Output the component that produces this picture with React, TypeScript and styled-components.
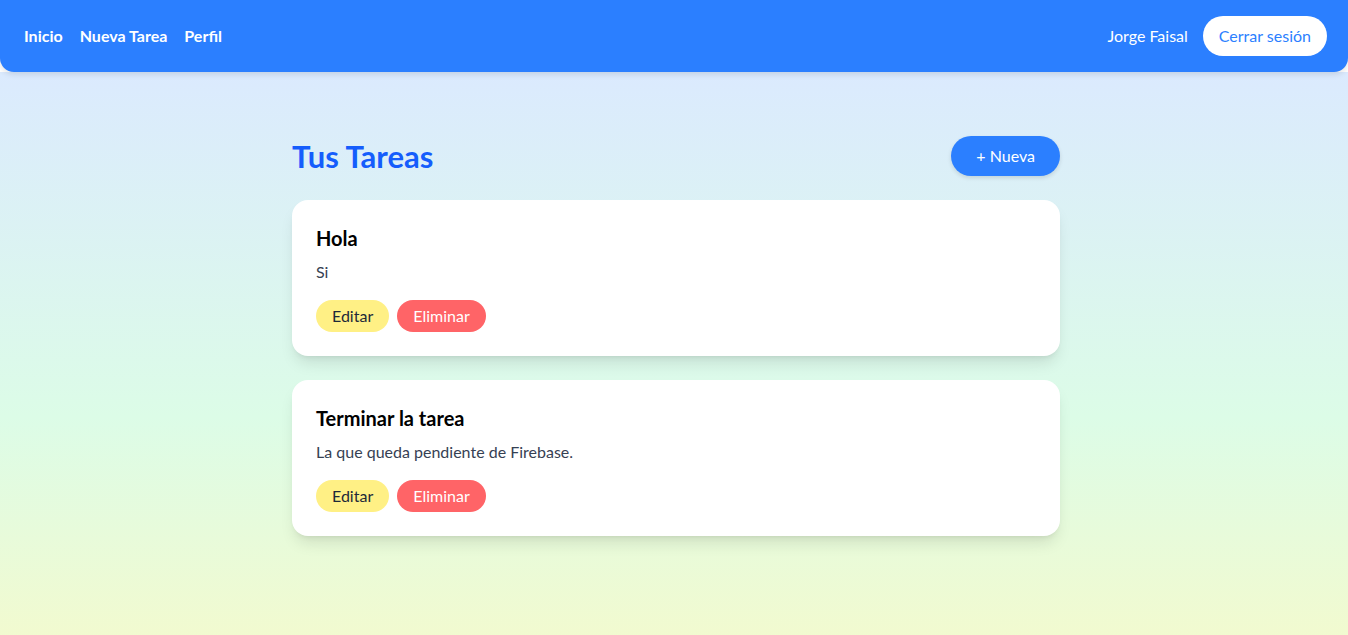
import React from "react";
import styled, { createGlobalStyle } from "styled-components";

const GlobalStyle = createGlobalStyle`
  html, body { margin: 0; padding: 0; background: #ffffff; }
  body { font-family: Lato, "Open Sans", "Noto Sans", sans-serif; }
  * { box-sizing: border-box; }
`;

const Page = styled.div`
  height: 100vh;
  display: flex;
  flex-direction: column;
  overflow: hidden;
`;

const NavBar = styled.nav`
  height: 72px;
  flex-shrink: 0;
  background: #2b7fff;
  border-radius: 0 0 14px 14px;
  display: flex;
  align-items: center;
  justify-content: space-between;
  padding: 0 21px 0 24px;
  box-shadow: 0 2px 6px rgba(0, 0, 0, 0.12);
  position: relative;
  z-index: 1;
`;

const NavLinks = styled.div`
  display: flex;
  gap: 17px;
`;

const NavLink = styled.a`
  color: #ffffff;
  font-weight: 700;
  font-size: 16px;
  line-height: 24px;
  text-decoration: none;
`;

const UserArea = styled.div`
  display: flex;
  align-items: center;
  gap: 15px;
`;

const UserName = styled.span`
  color: #ffffff;
  font-size: 16px;
  line-height: 24px;
`;

const LogoutButton = styled.button`
  background: #ffffff;
  color: #2b7fff;
  border: none;
  border-radius: 9999px;
  font-family: inherit;
  font-size: 16px;
  line-height: 24px;
  padding: 8px 16px;
  cursor: pointer;
`;

const Main = styled.main`
  flex: 1;
  background: linear-gradient(to bottom, #dbeafe, #dcfce7, #fef9c2) top / 100% 690px no-repeat;
  display: flex;
  justify-content: center;
  padding: 64px 0 0 4px;
`;

const Container = styled.div`
  width: 768px;
`;

const HeaderRow = styled.div`
  display: flex;
  align-items: center;
  justify-content: space-between;
  margin-bottom: 24px;
`;

const Title = styled.h1`
  margin: 0;
  font-size: 31px;
  line-height: 36px;
  font-weight: 700;
  color: #155dfc;
`;

const NewButton = styled.button`
  background: #2b7fff;
  color: #ffffff;
  border: none;
  border-radius: 9999px;
  font-family: inherit;
  font-size: 16px;
  line-height: 24px;
  padding: 8px 25px;
  box-shadow: 0 2px 4px rgba(0, 0, 0, 0.12);
  cursor: pointer;
`;

const TaskList = styled.div`
  display: flex;
  flex-direction: column;
  gap: 24px;
`;

const Card = styled.div`
  background: #ffffff;
  border-radius: 16px;
  padding: 24px;
  box-shadow: 0 10px 15px -3px rgba(0, 0, 0, 0.1), 0 4px 6px -4px rgba(0, 0, 0, 0.1);
`;

const CardTitle = styled.h2`
  margin: 0 0 8px;
  font-size: 20px;
  line-height: 28px;
  font-weight: 700;
  color: #000000;
`;

const CardText = styled.p`
  margin: 0;
  font-size: 16px;
  line-height: 24px;
  color: #364153;
`;

const Actions = styled.div`
  display: flex;
  gap: 8px;
  margin-top: 16px;
`;

const ActionButton = styled.button<{ $variant: "edit" | "delete" }>`
  border: none;
  border-radius: 9999px;
  font-family: inherit;
  font-size: 16px;
  line-height: 24px;
  padding: 4px 16px;
  cursor: pointer;
  background: ${(p) => (p.$variant === "edit" ? "#fff085" : "#ff6467")};
  color: ${(p) => (p.$variant === "edit" ? "#1e2939" : "#ffffff")};
`;

const tasks = [
  { id: 1, title: "Hola", description: "Si" },
  { id: 2, title: "Terminar la tarea", description: "La que queda pendiente de Firebase." },
];

export default function App() {
  return (
    <>
      <GlobalStyle />
      <Page>
        <NavBar>
          <NavLinks>
            <NavLink href="#">Inicio</NavLink>
            <NavLink href="#">Nueva Tarea</NavLink>
            <NavLink href="#">Perfil</NavLink>
          </NavLinks>
          <UserArea>
            <UserName>Jorge Faisal</UserName>
            <LogoutButton>Cerrar sesión</LogoutButton>
          </UserArea>
        </NavBar>
        <Main>
          <Container>
            <HeaderRow>
              <Title>Tus Tareas</Title>
              <NewButton>+ Nueva</NewButton>
            </HeaderRow>
            <TaskList>
              {tasks.map((t) => (
                <Card key={t.id}>
                  <CardTitle>{t.title}</CardTitle>
                  <CardText>{t.description}</CardText>
                  <Actions>
                    <ActionButton $variant="edit">Editar</ActionButton>
                    <ActionButton $variant="delete">Eliminar</ActionButton>
                  </Actions>
                </Card>
              ))}
            </TaskList>
          </Container>
        </Main>
      </Page>
    </>
  );
}
